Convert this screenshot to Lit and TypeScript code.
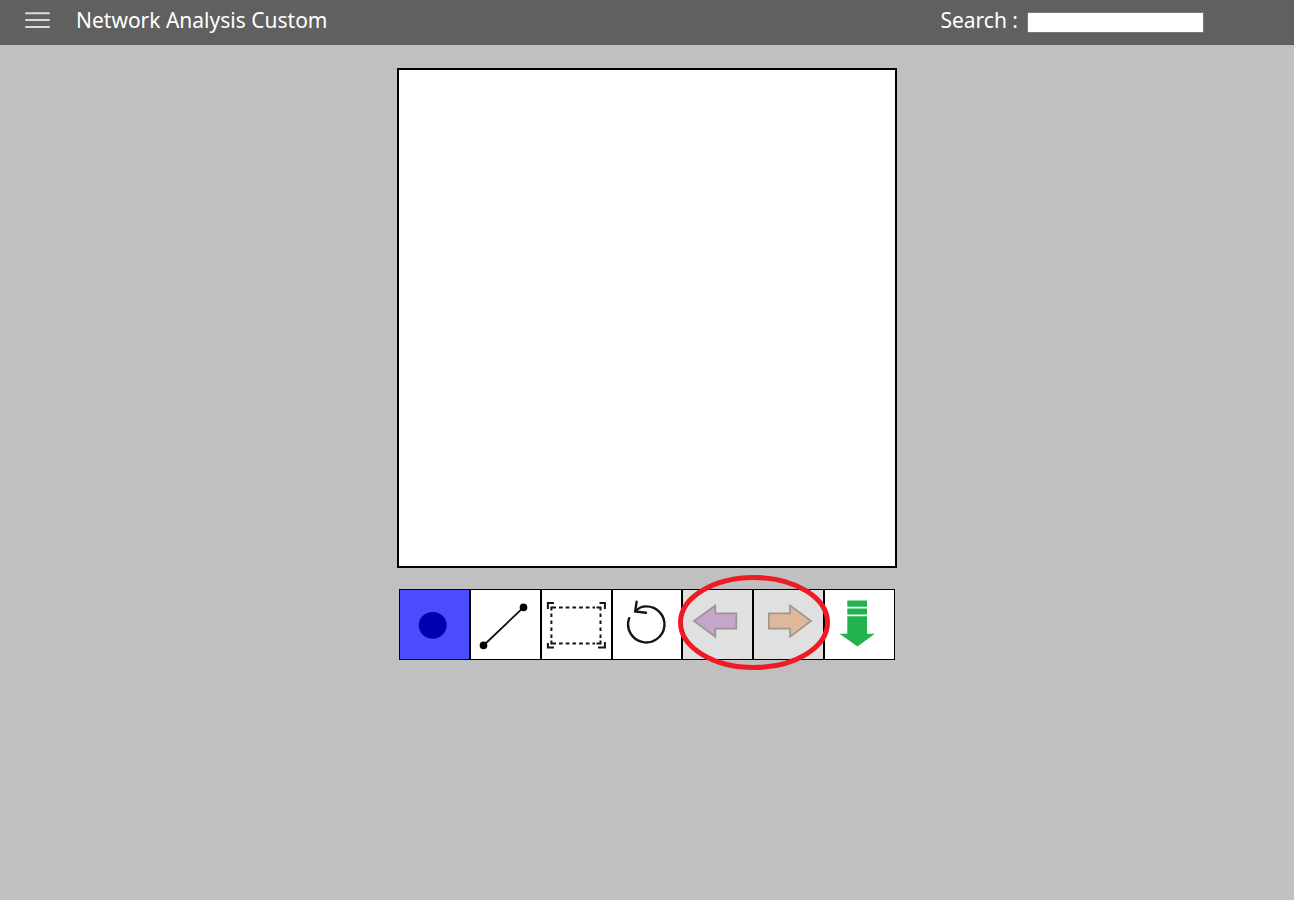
import { LitElement, html, css, svg } from "lit";
import { customElement, state } from "lit/decorators.js";
import { classMap } from "lit/directives/class-map.js";

interface Tool {
  id: string;
  label: string;
  disabled?: boolean;
  icon: unknown;
}

const TOOLS: Tool[] = [
  {
    id: "node",
    label: "Add node",
    icon: svg`<ellipse cx="33.7" cy="36.3" rx="14" ry="13.4" fill="#0000b0" />`,
  },
  {
    id: "edge",
    label: "Add edge",
    icon: svg`<path d="M13.5 56.5 53.5 18.3" stroke="#111" stroke-width="1.8" />
      <circle cx="13.5" cy="56.4" r="3.8" /><circle cx="53.5" cy="18.4" r="3.8" />`,
  },
  {
    id: "select",
    label: "Select area",
    icon: svg`<g fill="none" stroke="#151515" stroke-width="2">
      <path d="M6.9 20V14H13M58.5 14H63.9V20M63.9 53V58.4H57M13 58.4H6.9V54" />
      <path d="M10.4 21.5V18.6H15M55.5 18.6H59.5V21.5M59.5 51.5V54.4H55.5M15 54.4H10.4V51.5" />
      <path d="M18 18.6H54M18 54.4H54" stroke-dasharray="3.7 3" />
      <path d="M10.4 24.5V50M59.5 24.5V50" stroke-dasharray="3.4 3.6" />
    </g>`,
  },
  {
    id: "reset",
    label: "Reset",
    icon: svg`<g fill="none" stroke="#151515" stroke-width="2.4" stroke-linecap="round">
      <path d="M23.4 22.2C26.8 18.6 30 17.4 34.2 17.4A18.2 18 0 1 1 17.2 29.2" />
      <path d="M24.6 12.6 23.2 22.4 34 23.8" />
    </g>`,
  },
  {
    id: "undo",
    label: "Undo",
    disabled: true,
    icon: svg`<path d="M12 32 33.3 16.5V24.4H54.3V39.6H33.3V47.8Z" fill="#c5a6c8" stroke="#9d9499" stroke-width="1.7" />`,
  },
  {
    id: "redo",
    label: "Redo",
    disabled: true,
    icon: svg`<path d="M58 32 37 16.5V24.4H15.8V39.6H37V47.8Z" fill="#e1b79b" stroke="#9f9891" stroke-width="1.7" />`,
  },
  {
    id: "download",
    label: "Download",
    icon: svg`<path d="M23.3 11.5H43V17.8H23.3ZM23.3 19.5H43V25.4H23.3ZM23.3 27.2H43V44.7H50.8L33.5 57.4 15.5 44.7H23.3Z" fill="#22b14c" />`,
  },
];

@customElement("app-root")
export class AppRoot extends LitElement {
  @state() private active = "node";

  static styles = css`
    :host {
      display: block;
      min-height: 100vh;
      background: #c0c0c0;
      font-family: "Noto Sans", "Open Sans", sans-serif;
    }
    .bar {
      display: flex;
      align-items: center;
      box-sizing: border-box;
      height: 45px;
      padding: 0 90px 6px 24px;
      background: #606060;
      color: #fff;
      font-size: 21px;
      line-height: 30px;
    }
    .menu {
      display: flex;
      padding: 0;
      border: 0;
      background: none;
    }
    .title {
      margin: 0 0 0 26px;
      font-size: inherit;
      font-weight: 400;
    }
    .search {
      display: flex;
      align-items: center;
      gap: 9px;
      margin-left: auto;
    }
    .field {
      box-sizing: border-box;
      width: 177px;
      height: 21px;
      margin-top: 6px;
      padding: 1px 2px;
      border: 1px solid #767676;
      background: #fff;
      font-family: inherit;
      font-size: 13px;
    }
    .work {
      display: grid;
      justify-items: center;
      gap: 21px;
      padding: 23px 0;
    }
    .canvas {
      box-sizing: border-box;
      width: 500px;
      max-width: 100%;
      aspect-ratio: 1;
      border: 2px solid #000;
      background: #fff;
    }
    .tools {
      position: relative;
      display: grid;
      grid-template-columns: repeat(7, 1fr);
      width: 496px;
      max-width: 100%;
    }
    .tool {
      box-sizing: border-box;
      height: 71px;
      padding: 0;
      border: 1px solid #000;
      background: #fff;
      overflow: hidden;
    }
    .tool.active {
      background: #4c4cff;
    }
    .tool:disabled {
      background: #e0e0e0;
    }
    .glyph {
      display: block;
      width: 71px;
      height: 71px;
      margin: -1px;
    }
    .ring {
      position: absolute;
      left: 279px;
      top: -14px;
      width: 152px;
      height: 95px;
      pointer-events: none;
    }
  `;

  render() {
    return html`
      <header class="bar">
        <button class="menu" aria-label="Menu">
          <svg width="26" height="20" viewBox="0 0 26 20" fill="none" stroke="#dcdcdc" stroke-width="2" stroke-linecap="round">
            <path d="M2 3.2H25M2 10H25M2 17H25" />
          </svg>
        </button>
        <h1 class="title">Network Analysis Custom</h1>
        <div class="search">
          <label for="search">Search :</label>
          <input class="field" id="search" type="text" />
        </div>
      </header>
      <main class="work">
        <canvas class="canvas"></canvas>
        <div class="tools">
          ${TOOLS.map(
            (t) => html`<button
              class=${classMap({ tool: true, active: t.id === this.active })}
              aria-label=${t.label}
              ?disabled=${t.disabled}
              @click=${() => (this.active = t.id)}
            >
              <svg class="glyph" viewBox="0 0 71 71">${t.icon}</svg>
            </button>`
          )}
          <svg class="ring" viewBox="0 0 152 95" fill="none" stroke="#ed1c24" stroke-width="5">
            <ellipse cx="76" cy="47.5" rx="73.5" ry="45" />
          </svg>
        </div>
      </main>
    `;
  }
}
